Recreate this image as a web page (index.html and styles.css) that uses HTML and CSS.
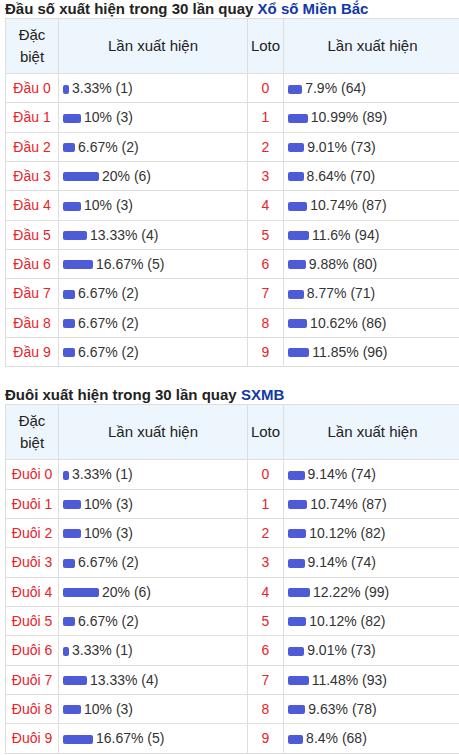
FILE: index.html
```html
<!DOCTYPE html>
<html lang="vi">
<head>
<meta charset="utf-8">
<link rel="stylesheet" href="styles.css">
</head>
<body>
<div class="page">
<h2 class="title">Đầu số xuất hiện trong 30 lần quay <a class="link">Xổ số Miền Bắc</a></h2>
<table class="stats">
<colgroup><col class="c1"><col class="c2"><col class="c3"><col class="c4"></colgroup>
<thead><tr><th>Đặc<br>biệt</th><th>Lần xuất hiện</th><th>Loto</th><th>Lần xuất hiện</th></tr></thead>
<tbody>
<tr><td class="red">Đầu 0</td><td class="val"><span class="bar" style="width:6px"></span>3.33% (1)</td><td class="red">0</td><td class="val"><span class="bar" style="width:14.2px"></span>7.9% (64)</td></tr>
<tr><td class="red">Đầu 1</td><td class="val"><span class="bar" style="width:18px"></span>10% (3)</td><td class="red">1</td><td class="val"><span class="bar" style="width:19.8px"></span>10.99% (89)</td></tr>
<tr><td class="red">Đầu 2</td><td class="val"><span class="bar" style="width:12px"></span>6.67% (2)</td><td class="red">2</td><td class="val"><span class="bar" style="width:16.2px"></span>9.01% (73)</td></tr>
<tr><td class="red">Đầu 3</td><td class="val"><span class="bar" style="width:36px"></span>20% (6)</td><td class="red">3</td><td class="val"><span class="bar" style="width:15.6px"></span>8.64% (70)</td></tr>
<tr><td class="red">Đầu 4</td><td class="val"><span class="bar" style="width:18px"></span>10% (3)</td><td class="red">4</td><td class="val"><span class="bar" style="width:19.3px"></span>10.74% (87)</td></tr>
<tr><td class="red">Đầu 5</td><td class="val"><span class="bar" style="width:24px"></span>13.33% (4)</td><td class="red">5</td><td class="val"><span class="bar" style="width:20.9px"></span>11.6% (94)</td></tr>
<tr><td class="red">Đầu 6</td><td class="val"><span class="bar" style="width:30px"></span>16.67% (5)</td><td class="red">6</td><td class="val"><span class="bar" style="width:17.8px"></span>9.88% (80)</td></tr>
<tr><td class="red">Đầu 7</td><td class="val"><span class="bar" style="width:12px"></span>6.67% (2)</td><td class="red">7</td><td class="val"><span class="bar" style="width:15.8px"></span>8.77% (71)</td></tr>
<tr><td class="red">Đầu 8</td><td class="val"><span class="bar" style="width:12px"></span>6.67% (2)</td><td class="red">8</td><td class="val"><span class="bar" style="width:19.1px"></span>10.62% (86)</td></tr>
<tr><td class="red">Đầu 9</td><td class="val"><span class="bar" style="width:12px"></span>6.67% (2)</td><td class="red">9</td><td class="val"><span class="bar" style="width:21.3px"></span>11.85% (96)</td></tr>
</tbody>
</table>

<h2 class="title second">Đuôi xuất hiện trong 30 lần quay <a class="link">SXMB</a></h2>
<table class="stats">
<colgroup><col class="c1"><col class="c2"><col class="c3"><col class="c4"></colgroup>
<thead><tr><th>Đặc<br>biệt</th><th>Lần xuất hiện</th><th>Loto</th><th>Lần xuất hiện</th></tr></thead>
<tbody>
<tr><td class="red">Đuôi 0</td><td class="val"><span class="bar" style="width:6px"></span>3.33% (1)</td><td class="red">0</td><td class="val"><span class="bar" style="width:16.5px"></span>9.14% (74)</td></tr>
<tr><td class="red">Đuôi 1</td><td class="val"><span class="bar" style="width:18px"></span>10% (3)</td><td class="red">1</td><td class="val"><span class="bar" style="width:19.3px"></span>10.74% (87)</td></tr>
<tr><td class="red">Đuôi 2</td><td class="val"><span class="bar" style="width:18px"></span>10% (3)</td><td class="red">2</td><td class="val"><span class="bar" style="width:18.2px"></span>10.12% (82)</td></tr>
<tr><td class="red">Đuôi 3</td><td class="val"><span class="bar" style="width:12px"></span>6.67% (2)</td><td class="red">3</td><td class="val"><span class="bar" style="width:16.5px"></span>9.14% (74)</td></tr>
<tr><td class="red">Đuôi 4</td><td class="val"><span class="bar" style="width:36px"></span>20% (6)</td><td class="red">4</td><td class="val"><span class="bar" style="width:22px"></span>12.22% (99)</td></tr>
<tr><td class="red">Đuôi 5</td><td class="val"><span class="bar" style="width:12px"></span>6.67% (2)</td><td class="red">5</td><td class="val"><span class="bar" style="width:18.2px"></span>10.12% (82)</td></tr>
<tr><td class="red">Đuôi 6</td><td class="val"><span class="bar" style="width:6px"></span>3.33% (1)</td><td class="red">6</td><td class="val"><span class="bar" style="width:16.2px"></span>9.01% (73)</td></tr>
<tr><td class="red">Đuôi 7</td><td class="val"><span class="bar" style="width:24px"></span>13.33% (4)</td><td class="red">7</td><td class="val"><span class="bar" style="width:20.7px"></span>11.48% (93)</td></tr>
<tr><td class="red">Đuôi 8</td><td class="val"><span class="bar" style="width:18px"></span>10% (3)</td><td class="red">8</td><td class="val"><span class="bar" style="width:17.3px"></span>9.63% (78)</td></tr>
<tr><td class="red">Đuôi 9</td><td class="val"><span class="bar" style="width:30px"></span>16.67% (5)</td><td class="red">9</td><td class="val"><span class="bar" style="width:15.1px"></span>8.4% (68)</td></tr>
</tbody>
</table>
</div>
</body>
</html>
```
FILE: styles.css
```css
html, body {
  margin: 0;
  padding: 0;
  background: #fff;
  overflow: hidden;
}
body {
  font-family: "Liberation Sans", Arial, sans-serif;
  font-size: 14px;
  color: #333;
}
.page {
  padding-left: 5px;
  width: 470px;
}
.title {
  margin: 0;
  font-size: 15px;
  line-height: 18px;
  font-weight: bold;
  color: #222;
  white-space: nowrap;
}
.title.second {
  margin-top: 19px;
}
.link {
  color: #1238a8;
  text-decoration: none;
}
.stats {
  border-collapse: collapse;
  table-layout: fixed;
  width: 456px;
}
.c1 { width: 53px; }
.c2 { width: 189px; }
.c3 { width: 36px; }
.c4 { width: 178px; }
.stats th, .stats td {
  border: 1px solid #dedede;
}
.stats th {
  background: #eef6fd;
  font-weight: normal;
  font-size: 15px;
  color: #222;
  line-height: 21.5px;
  padding: 5px 2px 6px;
  text-align: center;
}
.stats td {
  line-height: 20.33px;
  padding: 4px 4px;
  text-align: center;
  white-space: nowrap;
}
.stats td.red {
  color: #ea2229;
  padding: 4px 2px;
}
.stats td.val {
  text-align: left;
  color: #333;
}
.bar {
  display: inline-block;
  height: 9px;
  background: #4e5bd7;
  border-radius: 2px;
  margin-right: 3px;
  vertical-align: -0.5px;
}
```
